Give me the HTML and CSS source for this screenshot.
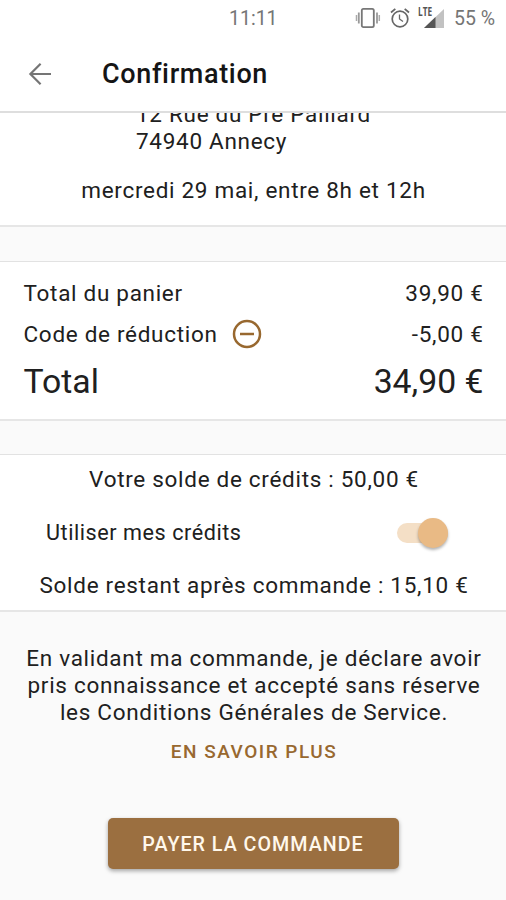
FILE: index.html
```html
<!DOCTYPE html>
<html lang="fr">
<head>
<meta charset="utf-8">
<meta name="viewport" content="width=device-width">
<title>Confirmation</title>
<link rel="stylesheet" href="styles.css">
</head>
<body>
<div class="screen">
  <div class="status">
    <span class="time">11:11</span>
    <svg class="vibrate" viewBox="0 0 26 22" fill="none" stroke="#777"><rect x="6.800" y="1.800" width="12" height="18.400" rx="1.600" stroke-width="1.800"/><path d="M3.800 5.500v11M22 5.500v11" stroke="#999" stroke-width="1.800"/><path d="M1.500 8v6M24.300 8v6" stroke="#aaa" stroke-width="1.500"/></svg>
    <svg class="alarm" viewBox="0 0 20 20" fill="none" stroke="#666"><circle cx="10" cy="11" r="7.800" stroke-width="1.700"/><path d="M9.500 6.500V11l3.500 2.500" stroke-width="1.300"/><path d="M1 4.500l4.300-3.600M19 4.500l-4.300-3.600" stroke-width="1.800"/></svg>
    <span class="signal"><span class="lte">LTE</span><svg viewBox="0 0 20 20"><path d="M0 20L20 1v19z" fill="#c2c2c2"/><path d="M0 20L11.500 9V20z" fill="#555"/></svg></span>
    <span class="battery">55 %</span>
  </div>
  <header class="bar">
    <svg class="back" viewBox="0 0 24 24" fill="none" stroke="#757575" stroke-width="2.200"><path d="M23 12H3M12.600 1.800L2.400 12l10.200 10.200"/></svg>
    <h1 class="title">Confirmation</h1>
  </header>
  <main>
    <section class="card delivery">
      <div class="address">12 Rue du Pré Paillard<br>74940 Annecy</div>
      <p class="slot">mercredi 29 mai, entre 8h et 12h</p>
    </section>
    <section class="card totals">
      <div class="row"><span>Total du panier</span><span>39,90 €</span></div>
      <div class="row code"><span>Code de réduction</span><svg class="remove" viewBox="0 0 30 30" fill="none" stroke="#98682f" stroke-width="2.500"><circle cx="15" cy="15" r="13"/><path d="M8 15h14"/></svg><span class="amount">-5,00 €</span></div>
      <div class="row total"><span>Total</span><span>34,90 €</span></div>
    </section>
    <section class="card credits">
      <p class="balance">Votre solde de crédits : 50,00 €</p>
      <div class="use"><span class="label">Utiliser mes crédits</span><span class="switch"><span class="thumb"></span></span></div>
      <p class="balance">Solde restant après commande : 15,10 €</p>
    </section>
    <section class="terms">
      <p class="legal">En validant ma commande, je déclare avoir<br>pris connaissance et accepté sans réserve<br>les Conditions Générales de Service.</p>
      <a class="more">EN SAVOIR PLUS</a>
      <button class="pay">PAYER LA COMMANDE</button>
    </section>
  </main>
</div>
</body>
</html>
```
FILE: styles.css
```css
* { box-sizing: border-box; }
body { margin: 0; background: #fafafa; font-family: Roboto, sans-serif; color: #202020; }
p, h1 { margin: 0; font-weight: 400; }
.screen { width: 506px; height: 900px; overflow: hidden; font-size: 22.5px; line-height: 27px; letter-spacing: 0.7px; display: flex; flex-direction: column; }
.status { height: 36px; flex: none; background: #fff; display: flex; align-items: center; color: #757575; font-size: 19.5px; letter-spacing: 0; padding-left: 229px; }
.time { width: 126px; }
.vibrate { width: 26px; height: 22px; margin-right: 9px; }
.alarm { width: 20px; height: 20px; margin-right: 8px; }
.signal { position: relative; width: 26px; height: 20px; margin-right: 10px; display: flex; justify-content: flex-end; }
.signal svg { width: 20px; height: 20px; }
.lte { position: absolute; left: 0; top: -2px; font: 700 11.5px/11px "Open Sans", sans-serif; letter-spacing: 0; transform: scaleX(.72); transform-origin: left; color: #555; }
.battery { white-space: nowrap; }
.bar { height: 77px; flex: none; background: #fff; border-bottom: 2px solid #dedede; display: flex; align-items: center; padding: 0 0 0 28px; }
.back { width: 24px; height: 24px; margin-right: 50px; }
.title { font-size: 27px; font-weight: 500; line-height: 34px; color: #151515; letter-spacing: 0.65px; }
.card { background: #fff; border-top: 1.500px solid #e2e2e2; border-bottom: 2px solid #e6e6e6; }
.delivery { height: 114px; border-top: 0; overflow: hidden; text-align: center; }
.address { margin: -12.5px 0 0 136px; text-align: left; }
.slot { margin-top: 22px; padding-left: 1px; }
.totals { margin-top: 34px; height: 160px; padding: 17.5px 22.5px 0 23.5px; }
.row { display: flex; justify-content: space-between; }
.code { align-items: center; margin-top: 12.5px; height: 30px; }
.remove { width: 30px; height: 30px; margin-left: 14px; }
.amount { margin-left: auto; }
.total { font-size: 33.75px; line-height: 42px; margin-top: 11.5px; letter-spacing: 0; }
.credits { margin-top: 33px; height: 158px; padding-top: 11px; text-align: center; }
.balance { padding-left: 2px; }
.use { display: flex; justify-content: space-between; align-items: center; padding: 0 58px 0 46px; margin: 26px 0; }
.label { font-size: 21.6px; letter-spacing: 0.55px; }
.switch { width: 51px; height: 20px; border-radius: 10px; background: #f4dfc6; display: flex; justify-content: flex-end; align-items: center; }
.thumb { width: 30px; height: 30px; flex: none; border-radius: 50%; background: #e9ba85; box-shadow: 0 2px 3px rgba(0,0,0,.3); }
.terms { display: flex; flex-direction: column; align-items: center; padding-top: 33px; text-align: center; }
.legal { padding-left: 2px; }
.more { font-size: 19px; font-weight: 500; color: #98682f; letter-spacing: 1.5px; padding-left: 2px; margin-top: 12px; }
.pay { width: 291px; height: 51px; margin-top: 53px; border: 0; border-radius: 5px; background: #9b6f40; color: #fff8ec; font: 500 19.700px/27px Roboto, sans-serif; letter-spacing: 1px; padding-top: 2px; box-shadow: 0 2px 4px rgba(0,0,0,.35); }
```
